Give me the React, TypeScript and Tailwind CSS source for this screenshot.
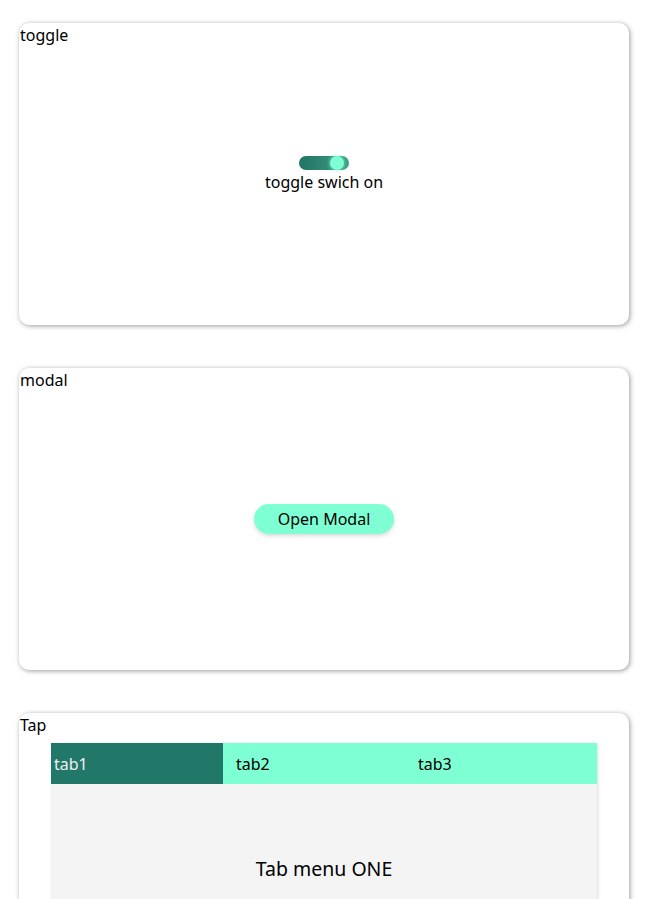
import React, { useState } from "react";

const font = { fontFamily: '"Noto Sans", "Noto Sans CJK KR", sans-serif' };

function Card({ title, children }: { title: string; children: React.ReactNode }) {
  return (
    <div className="relative w-[610px] h-[302px] shrink-0 rounded-[10px] bg-white shadow-[1px_1px_5px_rgba(0,0,0,0.4)]">
      <div className="absolute left-[1px] top-[1px] text-[16px] leading-[22px] text-black">{title}</div>
      {children}
    </div>
  );
}

export default function App() {
  const [on, setOn] = useState(true);
  const [tab, setTab] = useState(0);
  const tabs = ["tab1", "tab2", "tab3"];
  const contents = ["Tab menu ONE", "Tab menu TWO", "Tab menu THREE"];
  return (
    <div style={font} className="bg-white pl-[19px] pt-[23px] flex flex-col gap-[43px] overflow-hidden h-[899px]">
      <Card title="toggle">
        <div className="h-full flex flex-col items-center justify-center">
          <button
            onClick={() => setOn(!on)}
            className="relative w-[50px] h-[14px] rounded-full bg-[linear-gradient(to_right,#1f7463,#3f9a85)]"
          >
            <span className="absolute right-[5px] top-0 w-[14px] h-[14px] rounded-full bg-[#7fffd4] shadow-[0_0_4px_rgba(127,255,212,0.9)]" />
          </button>
          <div className="text-[16px] leading-[22px] mt-[1px] text-black">toggle swich {on ? "on" : "off"}</div>
        </div>
      </Card>
      <Card title="modal">
        <div className="h-full flex items-center justify-center">
          <button className="w-[140px] h-[30px] rounded-full bg-[#7fffd4] text-[16px] text-black shadow-[0_2px_4px_rgba(0,0,0,0.15)]">
            Open Modal
          </button>
        </div>
      </Card>
      <Card title="Tap">
        <div className="pt-[30px] px-[32px]">
          <div className="shadow-[1px_1px_3px_rgba(0,0,0,0.15)]">
            <div className="flex h-[41px] bg-[#7fffd4]">
              {tabs.map((t, i) => (
                <div
                  key={t}
                  onClick={() => setTab(i)}
                  className={
                    i === tab
                      ? "w-[182px] flex items-center pl-[3px] text-[16px] text-[#f0f0f0] bg-[linear-gradient(to_right,#217869_172px,transparent_172px)]"
                      : "w-[182px] flex items-center pl-[3px] text-[16px] text-black"
                  }
                >
                  {t}
                </div>
              ))}
            </div>
            <div className="h-[170px] bg-[#f4f4f4] flex items-center justify-center text-[19.5px] text-black">
              {contents[tab]}
            </div>
          </div>
        </div>
      </Card>
    </div>
  );
}
